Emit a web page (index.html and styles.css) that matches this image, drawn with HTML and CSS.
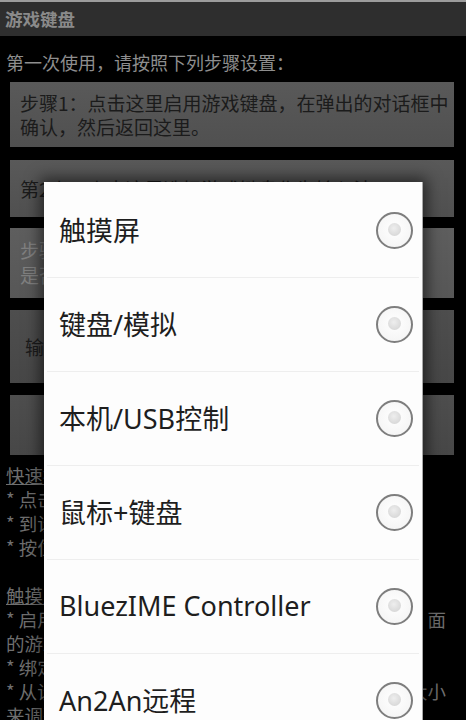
FILE: index.html
```html
<!DOCTYPE html>
<html lang="zh-CN">
<head>
<meta charset="utf-8">
<title>游戏键盘</title>
<link rel="stylesheet" href="styles.css">
</head>
<body>
<div class="screen">
  <div class="topline"></div>
  <div class="titlebar">游戏键盘</div>
  <div class="content">
    <div class="intro">第一次使用，请按照下列步骤设置：</div>
    <div class="step step1">步骤1：点击这里启用游戏键盘，在弹出的对话框中确认，然后返回这里。</div>
    <div class="step step2">第2步：点击这里选择游戏键盘作为输入法。</div>
    <div class="step step3">步骤3：选择游戏键盘的工作模式，然后确认<br>是否已经完成设置。</div>
    <div class="step step4">输入法设置</div>
    <div class="step step5">更多设置</div>
    <div class="help">
      <div class="head">快速指南</div>
      <div class="line">*&nbsp;点击游戏中的输入框来打开游戏键盘</div>
      <div class="line">*&nbsp;到设置里可以修改键盘的布局和模式</div>
      <div class="line">*&nbsp;按住空白处可以拖动键盘</div>
      <div class="line">&nbsp;</div>
      <div class="head">触摸屏模式</div>
      <div class="line split"><span>*&nbsp;启用触摸屏模式后，按键会被映射到屏幕上</span><span>面</span></div>
      <div class="line">的游戏按钮上。</div>
      <div class="line">*&nbsp;绑定按键后，点击屏幕即可完成映射</div>
      <div class="line split"><span>*&nbsp;从设置中可以调整屏幕按键位置、透明度和</span><span>大小</span></div>
      <div class="line">来调整游戏体验。</div>
    </div>
  </div>

  <div class="dialog">
    <div class="item"><span class="label">触摸屏</span><span class="radio"></span></div>
    <div class="item"><span class="label">键盘/模拟</span><span class="radio"></span></div>
    <div class="item"><span class="label">本机/USB控制</span><span class="radio"></span></div>
    <div class="item"><span class="label">鼠标+键盘</span><span class="radio"></span></div>
    <div class="item"><span class="label">BluezIME Controller</span><span class="radio"></span></div>
    <div class="item"><span class="label">An2An远程</span><span class="radio"></span></div>
  </div>
</div>
</body>
</html>
```

FILE: styles.css
```css
html, body {
  margin: 0;
  padding: 0;
  background: #000;
}

.screen {
  position: relative;
  width: 466px;
  height: 720px;
  overflow: hidden;
  background: #000;
  font-family: "Noto Sans CJK SC", "Noto Sans", sans-serif;
}

.topline {
  height: 2px;
  background: #9c9c9c;
}

.titlebar {
  height: 34px;
  line-height: 33px;
  padding-left: 5px;
  background: #2e2e2e;
  color: #8a8a8a;
  font-size: 17.5px;
  font-weight: bold;
}

.content {
  display: flex;
  flex-direction: column;
}

.intro {
  margin-top: 14px;
  padding-left: 6px;
  line-height: 24px;
  font-size: 18px;
  color: #8e8e8e;
}

.step {
  margin: 0 12px 0 10px;
  box-sizing: border-box;
  font-size: 19px;
  line-height: 24px;
  color: #1b1b1b;
  background: linear-gradient(#595959, #505050);
  padding: 0 4px 0 10px;
}

.step1 {
  margin-top: 8px;
  height: 65px;
  padding-top: 9px;
}

.step2 {
  margin-top: 13px;
  height: 57px;
  display: flex;
  align-items: center;
}

.step3 {
  margin-top: 11px;
  height: 70px;
  padding-top: 9px;
  line-height: 25px;
  color: #808080;
  background: linear-gradient(#5e5e5e, #575757);
}

.step4 {
  margin-top: 12px;
  height: 73px;
  padding-left: 15px;
  display: flex;
  align-items: center;
  background: linear-gradient(#4e4e4e, #474747);
}

.step5 {
  margin-top: 12px;
  height: 60px;
  display: flex;
  align-items: center;
  justify-content: center;
  background: linear-gradient(#4e4e4e, #474747);
}

.help {
  margin-top: 8px;
  font-size: 18.5px;
  line-height: 24px;
  color: #6f6f6f;
  padding-left: 6px;
}

.help .head {
  text-decoration: underline;
}

.help .line {
  white-space: nowrap;
}

.help .split {
  display: flex;
  justify-content: space-between;
  width: 440px;
}

.dialog {
  position: absolute;
  left: 44px;
  top: 182px;
  width: 379px;
  height: 560px;
  box-sizing: border-box;
  padding-top: 2px;
  background: #fdfdfd;
  border-right: 1px solid #a8a8a8;
  box-shadow: 0 0 14px 4px rgba(0, 0, 0, 0.55);
  display: flex;
  flex-direction: column;
}

.item {
  height: 94px;
  flex: none;
  box-sizing: border-box;
  display: flex;
  align-items: center;
  justify-content: space-between;
  padding: 0 6px 0 15px;
  border-bottom: 1px solid #eeeeee;
  margin: 0 3px;
  font-family: "Noto Sans", "Noto Sans CJK SC", sans-serif;
  font-size: 27px;
  color: #1e1e1e;
}

.item .label {
  margin-left: -3px;
  margin-top: -2px;
}

.radio {
  width: 37px;
  height: 37px;
  box-sizing: border-box;
  border-radius: 50%;
  border: 2.5px solid #7e7e7e;
  background: radial-gradient(circle at 50% 45%, #ffffff 0%, #f6f6f6 70%, #ececec 100%);
  position: relative;
  flex: none;
}

.radio::after {
  content: "";
  position: absolute;
  left: 10px;
  top: 9px;
  width: 13px;
  height: 13px;
  border-radius: 50%;
  background: radial-gradient(circle at 45% 40%, #eeeeee 0%, #dcdcdc 60%, #cfcfcf 100%);
}
```
